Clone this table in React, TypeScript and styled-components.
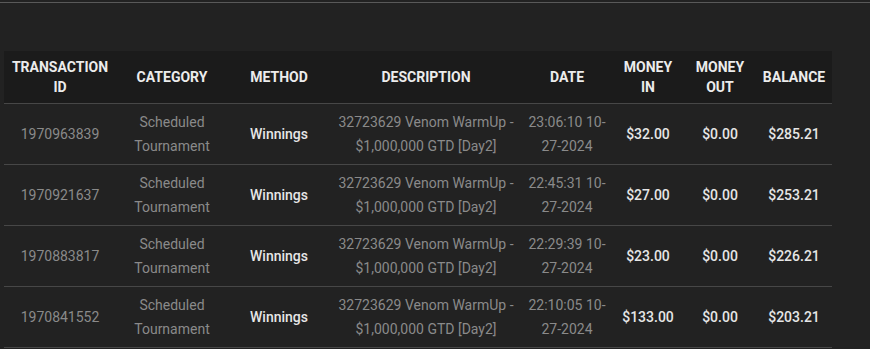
import styled, { createGlobalStyle } from "styled-components";

const GlobalStyle = createGlobalStyle`
  html, body {
    margin: 0;
    padding: 0;
    background: #222222;
    font-family: Roboto, "Liberation Sans", Arial, sans-serif;
  }
`;

type Row = {
  id: string;
  time: string;
  date: string;
  moneyIn: string;
  balance: string;
};

const rows: Row[] = [
  { id: "1970963839", time: "23:06:10", date: "10-27-2024", moneyIn: "$32.00", balance: "$285.21" },
  { id: "1970921637", time: "22:45:31", date: "10-27-2024", moneyIn: "$27.00", balance: "$253.21" },
  { id: "1970883817", time: "22:29:39", date: "10-27-2024", moneyIn: "$23.00", balance: "$226.21" },
  { id: "1970841552", time: "22:10:05", date: "10-27-2024", moneyIn: "$133.00", balance: "$203.21" },
];

const columns = [
  { label: "TRANSACTION ID", width: 112 },
  { label: "CATEGORY", width: 112 },
  { label: "METHOD", width: 102 },
  { label: "DESCRIPTION", width: 192 },
  { label: "DATE", width: 90 },
  { label: "MONEY IN", width: 72 },
  { label: "MONEY OUT", width: 72 },
  { label: "BALANCE", width: 76 },
];

export default function App() {
  return (
    <>
      <GlobalStyle />
      <Page>
        <Divider />
        <Panel>
          <Table>
            <colgroup>
              {columns.map((c) => (
                <Col key={c.label} $width={c.width} />
              ))}
            </colgroup>
            <thead>
              <HeadRow>
                {columns.map((c) => (
                  <Th key={c.label}>{c.label}</Th>
                ))}
              </HeadRow>
            </thead>
            <tbody>
              {rows.map((r) => (
                <BodyRow key={r.id}>
                  <Td>{r.id}</Td>
                  <Td>Scheduled Tournament</Td>
                  <Td $strong>Winnings</Td>
                  <Td>32723629 Venom WarmUp - $1,000,000 GTD [Day2]</Td>
                  <Td>
                    {r.time} {r.date.slice(0, 3)}
                    <wbr />
                    {r.date.slice(3)}
                  </Td>
                  <Td $strong>{r.moneyIn}</Td>
                  <Td $strong>$0.00</Td>
                  <Td $strong>{r.balance}</Td>
                </BodyRow>
              ))}
            </tbody>
          </Table>
        </Panel>
      </Page>
    </>
  );
}

const Page = styled.div`
  width: 870px;
  height: 349px;
  padding-top: 2px;
  box-sizing: border-box;
  overflow: hidden;
`;

const Divider = styled.div`
  height: 1px;
  background: #595959;
`;

const Panel = styled.div`
  padding: 48px 0 0 4px;
`;

const Table = styled.table`
  width: 828px;
  table-layout: fixed;
  border-collapse: collapse;
`;

const Col = styled.col<{ $width: number }>`
  width: ${(p) => p.$width}px;
`;

const HeadRow = styled.tr`
  background: #1b1b1b;
  border-bottom: 1px solid #474747;
`;

const Th = styled.th`
  padding: 6px 4px;
  font-size: 14px;
  font-weight: 700;
  line-height: 20px;
  color: #ececec;
  text-align: center;
  vertical-align: middle;
`;

const BodyRow = styled.tr`
  border-bottom: 1px solid #474747;
`;

const Td = styled.td<{ $strong?: boolean }>`
  padding: 6px 4px;
  font-size: 14px;
  line-height: 24px;
  font-weight: ${(p) => (p.$strong ? 500 : 400)};
  color: ${(p) => (p.$strong ? "#e6e6e6" : "#8a8a8a")};
  text-align: center;
  vertical-align: middle;
`;
